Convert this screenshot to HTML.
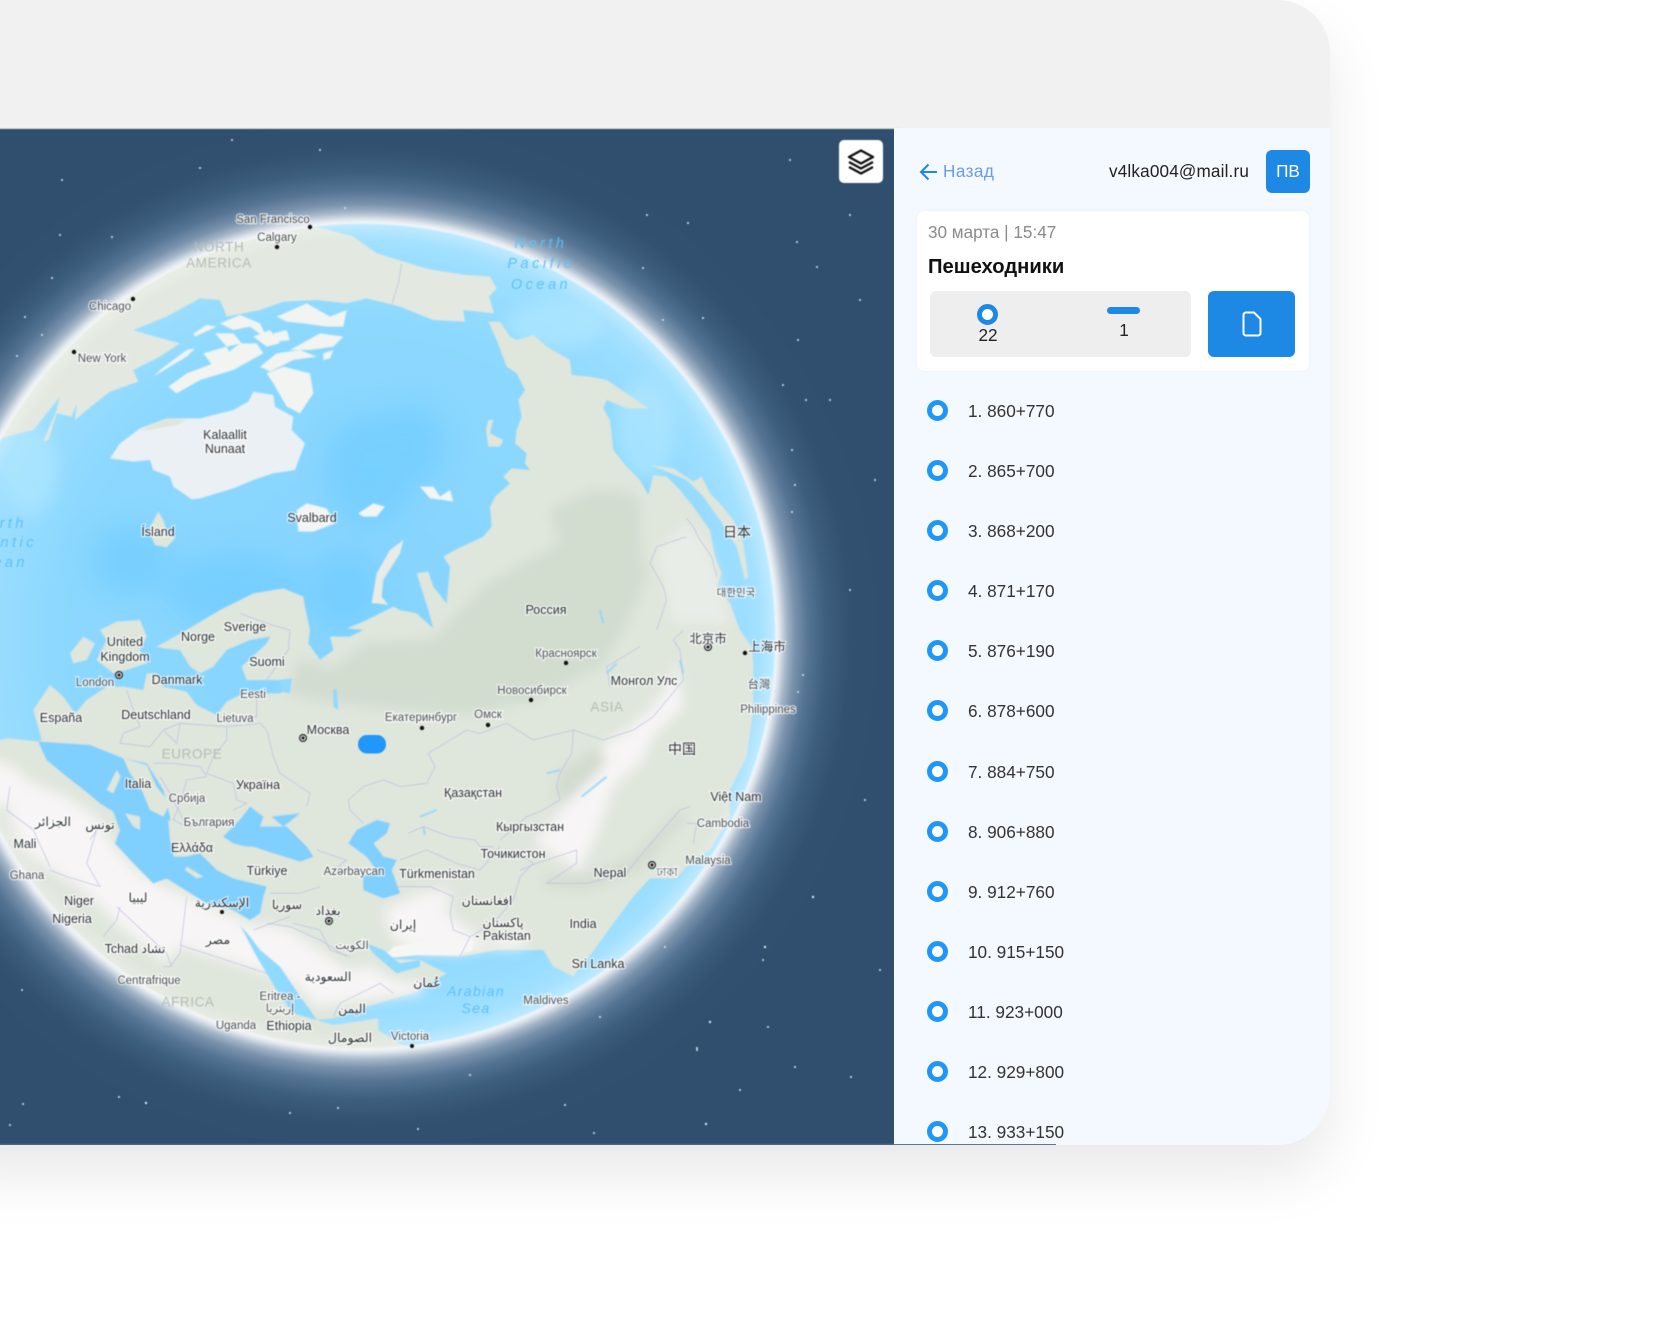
<!DOCTYPE html>
<html><head><meta charset="utf-8">
<style>
html,body{margin:0;padding:0;width:1680px;height:1322px;background:#fff;overflow:hidden;font-family:"Liberation Sans",sans-serif}
#win{position:absolute;left:-60px;top:0;width:1390px;height:1145px;background:#f1f1f1;border-radius:0 53px 53px 0;box-shadow:0 30px 60px rgba(0,0,0,.09)}
#clip{position:absolute;left:0;top:0;width:1330px;height:1145px;border-radius:0 53px 53px 0;overflow:hidden}
#map{position:absolute;left:-6px;top:0;filter:blur(.4px)}
#panel{position:absolute;left:894px;top:128px;width:436px;height:1017px;background:#f4f8ff;overflow:hidden}
.a{position:absolute;white-space:nowrap}
.ring{position:absolute;width:11px;height:11px;border:5.5px solid #1f96fa;border-radius:50%;background:#fff}
.it{position:absolute;left:74px;font-size:17.2px;line-height:24px;color:#333;white-space:nowrap}
svg text{font-family:"Liberation Sans Narrow","Liberation Sans","DejaVu Sans","Noto Sans CJK SC",sans-serif;text-anchor:middle;dominant-baseline:central}
.l{font-size:12.5px;fill:#2f3437;stroke:rgba(255,255,255,.65);stroke-width:2.5px;paint-order:stroke}
.s{font-size:11.5px;fill:#4c5155;stroke:rgba(255,255,255,.7);stroke-width:2.5px;paint-order:stroke}
.c{font-size:13.5px;fill:#b3bcb5;letter-spacing:.6px}
.o{font-size:14.5px;fill:#5cc0f7;font-style:italic;letter-spacing:3.5px}
.o2{font-size:14px;letter-spacing:1.4px}
.e{text-anchor:end}
</style></head>
<body>
<div id="win"></div>
<div id="clip">
<svg id="map" width="906" height="1151" viewBox="-6 0 906 1151">
<defs>
<radialGradient id="glow" gradientUnits="userSpaceOnUse" cx="363" cy="636" r="530">
<stop offset="0.775" stop-color="#fff"/>
<stop offset="0.785" stop-color="#e4e9ef"/>
<stop offset="0.80" stop-color="#a3b5c7"/>
<stop offset="0.815" stop-color="#7a93ad"/>
<stop offset="0.84" stop-color="#557494"/>
<stop offset="0.875" stop-color="#3e5e7e"/>
<stop offset="0.92" stop-color="#32506f"/>
<stop offset="1" stop-color="#304e6d"/>
</radialGradient>
<radialGradient id="sea" gradientUnits="userSpaceOnUse" cx="363" cy="636" r="413">
<stop offset="0" stop-color="#85d4ff"/>
<stop offset="0.75" stop-color="#8cd8ff"/>
<stop offset="0.92" stop-color="#9bdeff"/>
<stop offset="1" stop-color="#ace4ff"/>
</radialGradient>
<radialGradient id="edge" gradientUnits="userSpaceOnUse" cx="363" cy="636" r="413">
<stop offset="0.96" stop-color="#fff" stop-opacity="0"/>
<stop offset="0.995" stop-color="#fff" stop-opacity=".22"/>
<stop offset="1" stop-color="#fff" stop-opacity=".7"/>
</radialGradient>
<clipPath id="gc"><circle cx="363" cy="636" r="413"/></clipPath>
<filter id="b1" x="-5%" y="-5%" width="110%" height="110%"><feGaussianBlur stdDeviation="1.5"/></filter>
<filter id="b2" x="-30%" y="-30%" width="160%" height="160%"><feGaussianBlur stdDeviation="14"/></filter>
<filter id="b3" x="-20%" y="-20%" width="140%" height="140%"><feGaussianBlur stdDeviation="8"/></filter>
<filter id="b4" x="-10%" y="-10%" width="120%" height="120%"><feGaussianBlur stdDeviation="18"/></filter>
</defs>
<rect x="-6" y="128" width="906" height="1" fill="#d5e0d2"/>
<rect x="-6" y="129" width="906" height="1022" fill="url(#glow)"/>
<g fill="#dbe6f0">
<circle cx="60" cy="235" r="1"/><circle cx="112" cy="237" r="1"/><circle cx="52" cy="278" r="1"/><circle cx="25" cy="317" r="1"/><circle cx="42" cy="335" r="1"/><circle cx="17" cy="356" r="1"/><circle cx="62" cy="180" r="1"/><circle cx="200" cy="168" r="1"/><circle cx="320" cy="150" r="1"/><circle cx="232" cy="140" r="1"/><circle cx="345" cy="208" r="1"/>
<circle cx="797" cy="242" r="1"/><circle cx="688" cy="223" r="1"/><circle cx="647" cy="215" r="1"/><circle cx="643" cy="268" r="1"/><circle cx="817" cy="267" r="1"/><circle cx="703" cy="318" r="1"/><circle cx="663" cy="320" r="1"/><circle cx="798" cy="340" r="1"/><circle cx="783" cy="385" r="1"/><circle cx="806" cy="400" r="1"/><circle cx="792" cy="450" r="1"/><circle cx="795" cy="485" r="1"/><circle cx="792" cy="512" r="1"/>
<circle cx="860" cy="170" r="1"/><circle cx="790" cy="160" r="1"/><circle cx="850" cy="215" r="1"/><circle cx="860" cy="300" r="1"/><circle cx="830" cy="400" r="1"/><circle cx="875" cy="480" r="1"/><circle cx="850" cy="590" r="1"/><circle cx="865" cy="800" r="1"/><circle cx="880" cy="970" r="1"/>
<circle cx="813" cy="897" r="1.2"/><circle cx="765" cy="947" r="1.2"/><circle cx="763" cy="960" r="1"/><circle cx="665" cy="947" r="1"/><circle cx="710" cy="1022" r="1.2"/><circle cx="768" cy="1027" r="1"/><circle cx="697" cy="1048" r="1"/><circle cx="600" cy="1017" r="1"/>
<circle cx="803" cy="675" r="1"/><circle cx="798" cy="692" r="1"/><circle cx="146" cy="1103" r="1.2"/><circle cx="23" cy="1104" r="1"/><circle cx="119" cy="1097" r="1"/><circle cx="338" cy="1108" r="1"/><circle cx="290" cy="1113" r="1"/><circle cx="418" cy="1129" r="1"/><circle cx="565" cy="1105" r="1"/><circle cx="594" cy="1133" r="1"/><circle cx="706" cy="1124" r="1.2"/><circle cx="697" cy="1050" r="1"/><circle cx="795" cy="1067" r="1"/><circle cx="851" cy="1077" r="1"/><circle cx="22" cy="990" r="1"/><circle cx="10" cy="1125" r="1"/><circle cx="740" cy="1090" r="1"/><circle cx="470" cy="1075" r="1"/>
</g>
<g clip-path="url(#gc)">
<circle cx="363" cy="636" r="413" fill="url(#sea)"/>
<g fill="#6ccbff" filter="url(#b2)" opacity=".6">
<ellipse cx="235" cy="590" rx="70" ry="38"/>
<ellipse cx="370" cy="470" rx="45" ry="55"/>
<ellipse cx="410" cy="445" rx="35" ry="40"/>
<ellipse cx="130" cy="560" rx="40" ry="35"/>
<ellipse cx="345" cy="590" rx="35" ry="40"/>
</g>
<g fill="#b3e8ff" filter="url(#b3)" opacity=".6">
<ellipse cx="555" cy="325" rx="50" ry="25"/>
<ellipse cx="645" cy="430" rx="30" ry="50"/>
<ellipse cx="30" cy="470" rx="28" ry="45"/>
</g>
<g transform="translate(0,630) scale(.33333)">
<g filter="url(#b1)" stroke-linejoin="round">
<!-- North America -->
<polygon fill="#e3e9e0" points="700,-1300 930,-1215 1060,-1180 1130,-1130 1260,-1090 1300,-1080 1400,-1065 1470,-1060 1490,-1025 1467,-1000 1482,-950 1390,-960 1395,-925 1300,-930 1200,-970 1100,-995 1040,-980 950,-990 850,-985 780,-960 680,-940 660,-990 600,-995 500,-940 400,-900 430,-890 540,-860 480,-820 400,-780 415,-745 330,-715 260,-660 225,-630 230,-680 215,-640 170,-650 145,-570 130,-565 170,-660 180,-700 100,-600 -300,-500 -300,-1300"/>
<!-- arctic islands -->
<g fill="#f1f4f0">
<polygon points="460,-760 560,-820 585,-845 560,-840 480,-780"/>
<polygon points="505,-730 530,-710 600,-750 700,-780 790,-830 770,-860 720,-860 640,-800 560,-770"/>
<polygon points="585,-880 650,-910 620,-915 580,-890"/>
<polygon points="645,-890 680,-850 725,-860 700,-890"/>
<polygon points="660,-920 720,-945 780,-920 805,-870 750,-910 700,-900"/>
<polygon points="830,-940 920,-980 990,-940 1040,-960 1030,-910 980,-910 910,-920 860,-925"/>
<polygon points="820,-890 860,-900 870,-870 830,-865"/>
<polygon points="780,-790 830,-830 900,-840 950,-820 880,-810 810,-775"/>
<polygon points="870,-840 960,-890 1030,-880 1000,-850 930,-840"/>
<polygon points="800,-770 850,-790 930,-770 940,-710 900,-650 860,-670 820,-740"/>
<polygon points="760,-880 810,-900 840,-860 800,-850"/>
<polygon points="610,-830 680,-850 700,-810 640,-790"/>
<polygon points="970,-830 1000,-840 990,-815 970,-810"/>
</g>
<!-- Greenland -->
<polygon fill="#ebf0f4" points="330,-515 360,-560 420,-605 500,-635 600,-635 700,-660 745,-685 760,-715 820,-705 825,-670 880,-640 875,-600 915,-560 900,-520 885,-480 820,-470 760,-450 700,-425 600,-395 575,-392 520,-430 510,-460 460,-480 450,-510 400,-505"/>
<polygon fill="#dfe6dc" points="420,-600 500,-635 560,-630 530,-615 450,-600"/>
<!-- Iceland, Svalbard etc -->
<polygon fill="#dfe6dc" points="445,-300 475,-355 490,-330 500,-300 525,-275 500,-248 465,-255"/>
<polygon fill="#f3f5f4" points="890,-360 920,-380 980,-365 1005,-320 940,-295 895,-295"/>
<polygon fill="#f3f5f4" points="1075,-350 1120,-380 1155,-370 1130,-340 1090,-340"/>
<polygon fill="#e8ece6" points="1115,-80 1130,-170 1170,-240 1210,-270 1200,-230 1150,-150 1145,-100 1165,-75 1130,-80"/>
<polygon fill="#f3f5f4" points="1260,-430 1300,-430 1320,-400 1350,-420 1360,-385 1330,-390 1290,-395"/>
<polygon fill="#dfe6dc" points="1465,-630 1480,-630 1470,-590 1510,-570 1500,-550 1465,-550 1458,-600"/>
<!-- UK -->
<polygon fill="#dfe6dc" points="290,90 320,30 300,0 350,-25 420,-30 440,20 420,60 440,100 380,120 340,130"/>
<polygon fill="#dfe6dc" points="210,70 250,20 285,40 260,90 220,100"/>
<!-- Main Eurasia + Africa -->
<polygon fill="#dfe6dc" points="-300,330 0,330 30,325 115,335 125,330 100,240 150,165 190,200 225,250 260,210 320,170 370,170 430,180 440,130 470,130 490,170 560,185 590,225 650,255 680,215 730,190 840,190 870,170 860,150 740,150 725,110 800,40 810,20 750,30 680,60 640,110 600,130 570,110 540,60 490,55 470,50 560,0 660,-60 760,-110 850,-125 910,-100 915,-70 930,0 925,40 960,90 1000,60 990,20 1050,20 1090,0 1040,-5 1090,-25 1180,-70 1200,-60 1250,-50 1300,-5 1285,-60 1250,-170 1285,-175 1300,-130 1340,-80 1350,-190 1330,-220 1365,-240 1450,-280 1475,-310 1470,-370 1485,-400 1530,-440 1510,-460 1535,-485 1590,-480 1575,-500 1580,-530 1545,-560 1550,-600 1565,-640 1555,-690 1575,-720 1550,-770 1520,-790 1490,-870 1465,-925 1500,-925 1530,-880 1550,-870 1600,-885 1640,-850 1710,-810 1715,-765 1770,-760 1820,-750 1880,-710 1945,-665 1880,-665 1820,-690 1810,-665 1830,-630 1840,-540 1880,-490 1920,-450 1945,-405 1960,-465 2000,-460 2040,-420 2080,-370 2130,-300 2145,-220 2165,-170 2150,-130 2190,-80 2220,0 2255,50 2260,100 2260,240 2240,380 2190,480 2190,560 2130,660 2060,710 2030,745 1950,745 1900,800 1840,880 1790,950 1720,1040 1660,1010 1630,960 1570,960 1490,960 1380,980 1250,975 1160,985 1260,990 1340,1030 1290,1060 1250,1085 1100,1130 1000,1165 950,1170 1000,1185 1135,1165 1135,1200 1200,1240 1300,1300 1300,1500 -300,1500"/>
<!-- Japan arc -->
<polygon fill="#dfe6dc" points="1950,-495 2020,-485 2080,-445 2105,-460 2130,-410 2160,-380 2200,-330 2230,-260 2245,-160 2235,-150 2210,-250 2160,-330 2110,-400 2060,-450 1990,-480"/>
</g>
<!-- soft tonal zones -->
<g filter="url(#b4)">
<polygon fill="#d2dccf" points="1650,-360 1780,-420 1900,-410 1920,-360 1920,-240 1940,-160 1880,-20 1800,110 1600,210 1400,250 1100,230 970,210 860,190 900,90 1000,120 1100,40 1300,30 1450,-130 1680,-260"/>
<polygon fill="#e9ede7" points="1970,-240 2060,-320 2120,-260 2150,-160 2190,-20 2020,-20"/>
<polygon fill="#f7f5f5" points="-300,340 20,400 100,460 200,500 290,560 340,650 420,730 470,760 540,790 700,860 760,890 800,880 870,900 960,960 1040,1020 1110,1010 1180,1050 1260,1060 1270,1090 1140,1105 950,1130 880,1060 800,1030 540,950 500,1000 350,880 250,780 150,720 60,650 20,520 -300,620"/>
<polygon fill="#f7f5f5" points="1150,840 1260,790 1350,780 1340,850 1410,900 1460,940 1580,900 1570,955 1460,955 1380,970 1250,965 1180,930"/>
<polygon fill="#f7f5f5" points="2030,80 2050,230 1960,320 1920,400 1840,470 1800,590 1740,720 1600,640 1650,580 1720,500 1800,420 1770,370 1880,300 1960,230 2020,140"/>
<polygon fill="#d3dbd0" points="1680,420 1800,350 1820,400 1720,500 1660,520"/>
<polygon fill="#d3dbd0" points="1620,740 1760,740 1900,680 2040,540 2060,560 1920,720 1760,780 1640,770"/>
</g>
<g filter="url(#b1)">
<polygon fill="#f6f6f4" points="1150,985 1250,975 1380,975 1420,960 1420,930 1300,930 1180,950"/>
<!-- Seas -->
<g fill="#7fcfff">
<polygon points="115,335 270,345 370,385 440,400 490,480 510,560 520,680 560,680 600,670 650,720 700,745 800,770 790,800 780,850 750,870 700,840 620,820 540,770 500,745 460,760 410,710 345,640 360,600 340,545 300,520 265,490 200,440 140,390"/>
<polygon points="670,620 720,570 750,530 790,560 780,590 860,590 920,650 940,680 900,695 820,670 740,650 700,640"/>
<polygon points="815,560 900,550 850,590"/>
<polygon points="1045,640 1070,600 1130,570 1170,580 1160,610 1120,640 1150,680 1190,690 1175,720 1200,790 1150,805 1090,780 1090,740 1130,720 1100,680"/>
</g>
<g fill="#90d9ff">
<polygon points="720,885 770,980 830,1080 880,1150 950,1170 930,1140 900,1100 840,1010 780,960 750,920"/>
<polygon points="1100,940 1120,970 1190,1030 1260,1010 1260,990 1200,1000 1150,960"/>
<polygon points="840,150 875,145 870,190 845,185"/>
<polygon points="1000,180 1010,175 1015,240 1000,230"/>
</g>
<!-- Med land overlays -->
<g fill="#dfe6dc">
<polygon points="370,385 440,405 470,470 510,520 490,560 450,540 425,480 390,430"/>
<polygon points="350,420 362,440 340,490 320,480"/>
<polygon points="375,550 420,560 420,600 400,590"/>
<polygon points="505,570 560,590 600,620 580,660 560,680 525,680 510,630"/>
<polygon points="600,640 650,640 640,700 610,680"/>
<polygon points="650,650 760,650 820,670 900,695 980,720 960,760 810,770 700,745 650,720 635,680"/>
<polygon points="560,710 610,740 590,745 555,720"/>
</g>
<g fill="none" stroke="#8bd6ff" stroke-width="5">
<path d="M1745,500 L1820,440"/><path d="M1820,130 L1850,100"/><path d="M1260,560 L1310,540"/><path d="M1640,430 L1680,420"/><path d="M1270,590 L1275,615"/>
<path d="M2050,130 L2040,90"/><path d="M1800,-60 L1810,-20"/>
</g>
</g>
<!-- Borders -->
<g fill="none" stroke="#b9bde2" stroke-width="2.4" stroke-linejoin="round" opacity=".8">
<polyline points="1045,510 1090,470 1150,450 1200,470 1280,460 1305,410 1285,370 1400,300 1440,310 1520,280 1600,330 1720,300 1715,370 1680,430 1670,470 1680,510 1620,545 1580,560 1500,630"/>
<polyline points="1720,300 1810,330 1900,300 1960,260 2050,150 2040,60 2020,30 2050,0"/>
<polyline points="1830,170 1820,110 1920,50"/>
<polyline points="1225,610 1270,590 1350,620 1425,630 1440,650 1480,650"/>
<polyline points="1200,690 1280,660 1370,700 1440,720 1500,650"/>
<polyline points="1170,770 1290,770 1360,800 1350,850 1360,900 1410,920 1380,980"/>
<polyline points="1560,720 1610,700 1730,660 1730,700 1640,760 1760,760 1880,730 1910,690 2040,540 2070,530"/>
<polyline points="1500,690 1540,660 1600,700 1560,740 1540,810 1480,880 1410,920"/>
<polyline points="2060,580 2090,580 2080,640"/>
<polyline points="2060,-335 2080,-310 2100,-270 2135,-220 2150,-160"/>
<polyline points="2060,-280 1970,-250 1950,-200 1990,-130 2000,-90 1970,0"/>
<polyline points="380,180 400,240 420,290 370,310 360,340 450,350 490,300 540,280 680,290 680,330 640,380 620,430 700,460 710,510 740,520 700,540"/>
<polyline points="540,280 530,340 490,300"/>
<polyline points="680,290 780,280 800,300 820,380 840,430 930,490 920,530"/>
<polyline points="460,400 520,400 600,410 620,440 560,450 540,520 520,570 560,590 680,580"/>
<polyline points="480,440 510,490 560,590"/>
<polyline points="770,180 770,260 680,270"/>
<polyline points="870,0 865,60 800,150"/>
<polyline points="1045,510 1050,540 1090,580"/>
<polyline points="950,660 1040,690 1000,720"/>
<polyline points="960,770 900,790 810,790"/>
<polyline points="880,880 960,900 990,960 1050,980"/>
<polyline points="870,860 760,900"/>
<polyline points="560,800 540,970 510,1010 490,1010"/>
<polyline points="540,945 800,1030"/>
<polyline points="360,830 350,870 310,920"/>
<polyline points="270,630 290,600 260,700 300,770 200,740 150,720"/>
<polyline points="30,470 20,540 100,600 150,710"/>
<polyline points="350,830 500,970 515,1010"/>
<polyline points="800,880 870,890 960,930 1040,980"/>
<polyline points="1180,1090 1140,1060 1020,1120 1000,1160"/>
<polyline points="720,-50 800,-20 870,0"/>
<polyline points="1205,-1100 1195,-1040 1175,-975"/>
</g>
</g>
<circle cx="363" cy="636" r="413" fill="url(#edge)"/>
</g>
<!-- layers control -->
<rect x="839" y="140" width="44" height="43" rx="5" fill="#fff"/>
<g fill="none" stroke="#111" stroke-width="2.4" stroke-linejoin="round">
<polygon points="861,150.500 873,157 861,163.500 849,157"/>
<polyline points="849,162 861,168.500 873,162"/>
<polyline points="849,167 861,173.500 873,167"/>
</g>
<!-- city dots -->
<g fill="#111">
<circle cx="310" cy="227" r="2.200"/><circle cx="277" cy="247" r="2.200"/><circle cx="133" cy="299" r="2.200"/><circle cx="74" cy="352" r="2.200"/><circle cx="422" cy="728" r="2.200"/><circle cx="488" cy="725" r="2.200"/><circle cx="566" cy="663" r="2.200"/><circle cx="531" cy="700" r="2.200"/><circle cx="745" cy="653" r="2.200"/><circle cx="222" cy="912" r="2"/><circle cx="412" cy="1046" r="2"/>
</g>
<g>
<circle cx="119" cy="675" r="4" fill="#222"/><circle cx="119" cy="675" r="2.800" fill="#eee"/><circle cx="119" cy="675" r="1.600" fill="#222"/>
<circle cx="303" cy="738" r="4" fill="#222"/><circle cx="303" cy="738" r="2.800" fill="#eee"/><circle cx="303" cy="738" r="1.600" fill="#222"/>
<circle cx="708" cy="647" r="4" fill="#222"/><circle cx="708" cy="647" r="2.800" fill="#eee"/><circle cx="708" cy="647" r="1.600" fill="#222"/>
<circle cx="652" cy="865" r="4" fill="#222"/><circle cx="652" cy="865" r="2.800" fill="#eee"/><circle cx="652" cy="865" r="1.600" fill="#222"/>
<circle cx="329" cy="921" r="4" fill="#222"/><circle cx="329" cy="921" r="2.800" fill="#eee"/><circle cx="329" cy="921" r="1.600" fill="#222"/>
</g>
<!-- marker -->
<rect x="358" y="735" width="28" height="18.500" rx="9" fill="#2196fb"/>
<!-- labels -->
<text class="c" x="219" y="247">NORTH</text><text class="c" x="219" y="263">AMERICA</text>
<text class="c" x="192" y="754">EUROPE</text><text class="c" x="188" y="1002">AFRICA</text><text class="c" x="607" y="707">ASIA</text>
<text class="o" x="541" y="244">North</text><text class="o" x="541" y="264">Pacific</text><text class="o" x="541" y="285">Ocean</text>
<text class="o e" x="27" y="524">North</text><text class="o e" x="37" y="543">Atlantic</text><text class="o e" x="28" y="563">Ocean</text>
<text class="o o2" x="476" y="991">Arabian</text><text class="o o2" x="476" y="1008">Sea</text>
<text class="s" x="273" y="220">San Francisco</text><text class="s" x="277" y="238">Calgary</text><text class="s" x="110" y="307">Chicago</text><text class="s" x="102" y="359">New York</text>
<text class="l" x="225" y="435">Kalaallit</text><text class="l" x="225" y="449">Nunaat</text><text class="l" x="312" y="518">Svalbard</text><text class="l" x="158" y="532">Ísland</text><text class="l" x="245" y="627">Sverige</text>
<text class="l" style="font-size:14px" x="737" y="532">日本</text><text class="s" style="font-size:10.500px" x="736" y="593">대한민국</text><text class="l" x="546" y="610">Россия</text>
<text class="l" x="125" y="642">United</text><text class="l" x="125" y="657">Kingdom</text><text class="l" x="198" y="637">Norge</text><text class="l" x="267" y="662">Suomi</text><text class="s" x="95" y="683">London</text><text class="l" x="177" y="680">Danmark</text><text class="s" x="253" y="695">Eesti</text><text class="l" x="61" y="718">España</text><text class="l" x="156" y="715">Deutschland</text><text class="s" x="235" y="719">Lietuva</text><text class="l" x="328" y="730">Москва</text>
<text class="l" x="138" y="784">Italia</text><text class="l" x="258" y="785">Україна</text><text class="s" x="187" y="799">Србија</text><text class="s" x="209" y="823">България</text><text class="l" x="192" y="848">Ελλάδα</text><text class="l" x="267" y="871">Türkiye</text><text class="s" x="354" y="872">Azərbaycan</text><text class="l" x="25" y="844">Mali</text><text class="s" x="27" y="876">Ghana</text><text class="l" x="79" y="901">Niger</text><text class="l" x="72" y="919">Nigeria</text><text class="l" x="135" y="949">Tchad تشاد</text><text class="s" x="149" y="981">Centrafrique</text><text class="s" x="280" y="997">Eritrea -</text><text class="s" x="280" y="1009">إريتريا</text><text class="s" x="236" y="1026">Uganda</text><text class="l" x="289" y="1026">Ethiopia</text>
<text class="l" x="53" y="822">الجزائر</text><text class="l" x="100" y="825">تونس</text><text class="l" x="138" y="898">ليبيا</text><text class="l" x="222" y="903">الإسكندرية</text><text class="l" x="218" y="940">مصر</text><text class="l" x="287" y="905">سوريا</text><text class="l" x="328" y="911">بغداد</text><text class="s" x="352" y="946">الكويت</text><text class="l" x="328" y="977">السعودية</text><text class="l" x="352" y="1009">اليمن</text><text class="l" x="350" y="1038">الصومال</text><text class="l" x="403" y="925">إيران</text><text class="s" x="410" y="1037">Victoria</text>
<text class="l" x="708" y="639">北京市</text><text class="l" x="767" y="647">上海市</text><text class="s" x="566" y="654">Красноярск</text><text class="l" x="644" y="681">Монгол Улс</text><text class="s" x="759" y="685">台灣</text><text class="s" x="532" y="691">Новосибирск</text><text class="s" x="421" y="718">Екатеринбург</text><text class="s" x="488" y="715">Омск</text><text class="s" x="768" y="710">Philippines</text><text class="l" style="font-size:14px" x="682" y="749">中国</text><text class="l" x="473" y="793">Қазақстан</text><text class="l" x="736" y="797">Việt Nam</text><text class="s" x="723" y="824">Cambodia</text><text class="l" x="530" y="827">Кыргызстан</text><text class="l" x="513" y="854">Точикистон</text><text class="s" x="708" y="861">Malaysia</text><text class="l" x="437" y="874">Türkmenistan</text><text class="l" x="610" y="873">Nepal</text><text class="s" x="667" y="873">ঢাকা</text><text class="l" x="487" y="901">افغانستان</text><text class="l" x="503" y="923">پاکستان</text><text class="l" x="503" y="936">- Pakistan</text><text class="l" x="583" y="924">India</text><text class="l" x="598" y="964">Sri Lanka</text><text class="l" x="427" y="983">عُمان</text><text class="s" x="546" y="1001">Maldives</text>
<rect x="-6" y="1144" width="906" height="1" fill="#5a7a9a"/>
</svg>
<div id="panel">
<svg class="a" style="left:25px;top:34px" width="20" height="20" viewBox="0 0 20 20"><path d="M18,10 H2 M9.500,2.500 L2,10 L9.500,17.500" fill="none" stroke="#1e88e5" stroke-width="2"/></svg>
<div class="a" style="left:49px;top:31px;font-size:17.14px;letter-spacing:.45px;line-height:24px;color:#6a9de4">Назад</div>
<div class="a" style="left:215px;top:31px;font-size:17.14px;letter-spacing:.17px;line-height:24px;color:#222">v4lka004@mail.ru</div>
<div class="a" style="left:372px;top:22px;width:44px;height:43px;background:#1e88e5;border-radius:6px;color:#fff;font-size:17.14px;line-height:43px;text-align:center">ПВ</div>
<div class="a" style="left:23px;top:83px;width:392px;height:160px;background:#fff;border-radius:7px;box-shadow:0 0 3px rgba(0,0,0,.04)"></div>
<div class="a" style="left:34px;top:92px;font-size:17.14px;line-height:24px;color:#8a8a8a">30 марта | 15:47</div>
<div class="a" style="left:34px;top:127px;font-size:20.2px;line-height:24px;font-weight:bold;color:#111">Пешеходники</div>
<div class="a" style="left:36px;top:163px;width:261px;height:66px;background:#eee;border-radius:6px"></div>
<div class="ring" style="left:83px;top:175.500px;border-color:#1e88e5"></div>
<div class="a" style="left:73px;top:194.500px;width:42px;text-align:center;font-size:17.14px;line-height:24px;color:#222">22</div>
<div class="a" style="left:213px;top:179px;width:33px;height:7px;background:#1e88e5;border-radius:4px"></div>
<div class="a" style="left:209px;top:190px;width:42px;text-align:center;font-size:17.14px;line-height:24px;color:#222">1</div>
<div class="a" style="left:314px;top:163px;width:87px;height:66px;background:#1e88e5;border-radius:6px"></div>
<svg class="a" style="left:348px;top:183px" width="20" height="26" viewBox="0 0 20 26"><path d="M4,1.500 H12 L18.500,8 V22 A2.500,2.500 0 0 1 16,24.500 H4 A2.500,2.500 0 0 1 1.500,22 V4 A2.500,2.500 0 0 1 4,1.500 Z" fill="none" stroke="#fff" stroke-width="2" stroke-linejoin="round"/></svg>
<div class="ring" style="left:33px;top:271.600px"></div><div class="it" style="top:270.700px">1. 860+770</div>
<div class="ring" style="left:33px;top:331.800px"></div><div class="it" style="top:330.900px">2. 865+700</div>
<div class="ring" style="left:33px;top:392px"></div><div class="it" style="top:391px">3. 868+200</div>
<div class="ring" style="left:33px;top:452px"></div><div class="it" style="top:451px">4. 871+170</div>
<div class="ring" style="left:33px;top:512px"></div><div class="it" style="top:511px">5. 876+190</div>
<div class="ring" style="left:33px;top:572.300px"></div><div class="it" style="top:571.300px">6. 878+600</div>
<div class="ring" style="left:33px;top:632.500px"></div><div class="it" style="top:631.500px">7. 884+750</div>
<div class="ring" style="left:33px;top:692.700px"></div><div class="it" style="top:691.700px">8. 906+880</div>
<div class="ring" style="left:33px;top:753px"></div><div class="it" style="top:752px">9. 912+760</div>
<div class="ring" style="left:33px;top:813px"></div><div class="it" style="top:812px">10. 915+150</div>
<div class="ring" style="left:33px;top:873px"></div><div class="it" style="top:872px">11. 923+000</div>
<div class="ring" style="left:33px;top:933.200px"></div><div class="it" style="top:932.200px">12. 929+800</div>
<div class="ring" style="left:33px;top:993.400px"></div><div class="it" style="top:992.400px">13. 933+150</div>
</div>
<div class="a" style="left:894px;top:1144px;width:162px;height:1px;background:#5a7a9a"></div>
</div>
</body></html>
